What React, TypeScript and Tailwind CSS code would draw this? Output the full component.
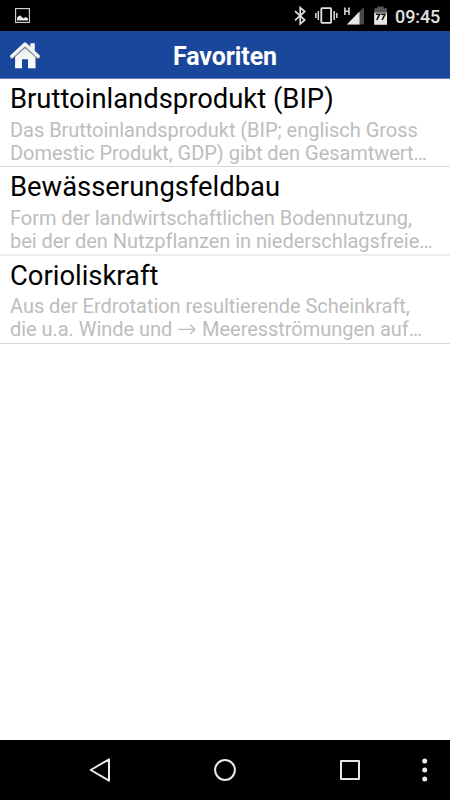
import React from 'react';

type Entry = { title: string; lines: [string, string]; box: string; gap: string };

const entries: Entry[] = [
  {
    title: 'Bruttoinlandsprodukt (BIP)',
    lines: ['Das Bruttoinlandsprodukt (BIP; englisch Gross', 'Domestic Produkt, GDP) gibt den Gesamtwert…'],
    box: 'h-[88px] border-[#d9d9d9]',
    gap: 'pt-[3px]',
  },
  {
    title: 'Bewässerungsfeldbau',
    lines: ['Form der landwirtschaftlichen Bodennutzung,', 'bei der den Nutzpflanzen in niederschlagsfreie…'],
    box: 'h-[89px] border-b-2 border-[#eeeeee]',
    gap: 'pt-[3px]',
  },
  {
    title: 'Corioliskraft',
    lines: ['Aus der Erdrotation resultierende Scheinkraft,', 'die u.a. Winde und → Meeresströmungen auf…'],
    box: 'h-[88px] border-[#d9d9d9]',
    gap: 'pt-[2px]',
  },
];

function Arrow() {
  return (
    <svg className="inline-block h-[15px] w-[20px] align-[-1px]" viewBox="0 0 20 15" fill="none" stroke="currentColor" strokeWidth="1.4">
      <path d="M1.3 7.4H18M13.3 2.7L18 7.4L13.3 12.1" />
    </svg>
  );
}

function Line({ text }: { text: string }) {
  const parts = text.split('→');
  return (
    <p className="whitespace-nowrap">
      {parts[0]}
      {parts.length > 1 && <Arrow />}
      {parts[1]}
    </p>
  );
}

function StatusBar() {
  return (
    <div className="flex h-[31px] shrink-0 items-center justify-between bg-black pr-[10px] pl-[15px]">
      <svg className="h-[15px] w-[15px]" viewBox="0 0 15 15">
        <rect x=".6" y=".6" width="13.8" height="13.8" fill="none" stroke="#dcdcdc" strokeWidth="1.1" />
        <path d="M2 12.6V9.5L3.8 8L5.5 7.4L7 9.3L8.7 10.2L10.3 9L11.6 9.4L13 10.6V12.6Z" fill="#e6e6e6" />
      </svg>
      <div className="flex items-center">
        <svg className="h-[31px] w-[100px]" viewBox="290 0 100 31" fill="none">
          <path d="M295 11.2L304.7 20L300.2 23.8V7.6L304.7 11.5L295 20.3" stroke="#dedede" strokeWidth="1.7" />
          <rect x="321.3" y="8.1" width="9.8" height="14.8" rx=".8" stroke="#e2e2e2" strokeWidth="1.8" />
          <path d="M315.8 13V18M318.3 11V20M334.2 11V20M336.8 13V18" stroke="#dedede" strokeWidth="1.5" />
          <path d="M344.9 7.6V15M349 7.6V15M344.8 11.3H349" stroke="#d4d4d4" strokeWidth="1.6" />
          <path d="M364 7V24.5H346.8Z" fill="#474747" />
          <path d="M359.5 11.6V24.5H346.8Z" fill="#e8e8e8" />
          <path d="M377.3 6.5H383.7V8.3H387V24.7H374.2V8.3H377.3Z" fill="#555" />
          <path d="M374.2 12.7H387V24.7H374.2Z" fill="#e8e8e8" />
          <path d="M375.8 14.2H379.7L376.8 20M381.1 14.2H385L382.1 20" stroke="#111" strokeWidth="1.6" />
        </svg>
        <span className="ml-[5px] w-[45px] pt-[3px] text-[18px] leading-[22px] font-medium tracking-[-0.1px] whitespace-nowrap text-[#e2e2e2]">09:45</span>
      </div>
    </div>
  );
}

function HomeIcon() {
  return (
    <svg className="h-[28px] w-[30px]" viewBox="0 0 30 28">
      <defs>
        <linearGradient id="roof" x1="0" y1="0" x2="0" y2="1">
          <stop offset="0" stopColor="#ececec" />
          <stop offset="1" stopColor="#fff" />
        </linearGradient>
      </defs>
      <path d="M20.2 2.2H24.8V10L20.2 6Z" fill="#f3f3f3" />
      <path d="M15 6.4L5.1 15.7V27.2H12V18.3H18V27.2H25.5V15.7Z" fill="url(#roof)" />
      <path d="M1.8 16.2L15 5L28.2 16.2" fill="none" stroke="#808694" strokeWidth="3.4" strokeLinejoin="round" strokeLinecap="round" />
      <path d="M1.8 15.2L15 3L28.2 15.2" fill="none" stroke="#f3f3f3" strokeWidth="3.2" strokeLinejoin="round" strokeLinecap="round" />
    </svg>
  );
}

export default function App() {
  return (
    <div className="flex h-[800px] w-[450px] flex-col overflow-hidden bg-white font-[Roboto,sans-serif]">
      <StatusBar />
      <header className="grid h-[48px] shrink-0 grid-cols-[1fr_auto_1fr] items-center border-b border-[#6a7fb9] bg-[#19479b] px-[10px]">
        <HomeIcon />
        <h1 className="pt-[5px] text-[25px] leading-[30px] font-bold tracking-[-0.08px] text-white">Favoriten</h1>
      </header>
      <main className="flex-1">
        {entries.map((e) => (
          <article key={e.title} className={`border-b px-[10px] pt-[3px] ${e.box}`}>
            <h2 className="text-[27.4px] leading-[34px] whitespace-nowrap text-black">{e.title}</h2>
            <div className={`text-[20px] leading-[23px] tracking-[-0.04px] text-[#bdbdbd] ${e.gap}`}>
              <Line text={e.lines[0]} />
              <Line text={e.lines[1]} />
            </div>
          </article>
        ))}
      </main>
      <nav className="h-[60px] shrink-0 bg-black">
        <svg className="h-[60px] w-[450px]" viewBox="0 0 450 60" fill="none" stroke="#e8e8e8" strokeWidth="2" strokeLinejoin="round">
          <path d="M109 19.3V40.7L90.7 30Z" />
          <circle cx="225" cy="30" r="9.9" />
          <rect x="341" y="21" width="18" height="18" />
          <g fill="#ececec" stroke="none">
            <circle cx="424.7" cy="21" r="2.5" />
            <circle cx="424.7" cy="30" r="2.5" />
            <circle cx="424.7" cy="39" r="2.5" />
          </g>
        </svg>
      </nav>
    </div>
  );
}
